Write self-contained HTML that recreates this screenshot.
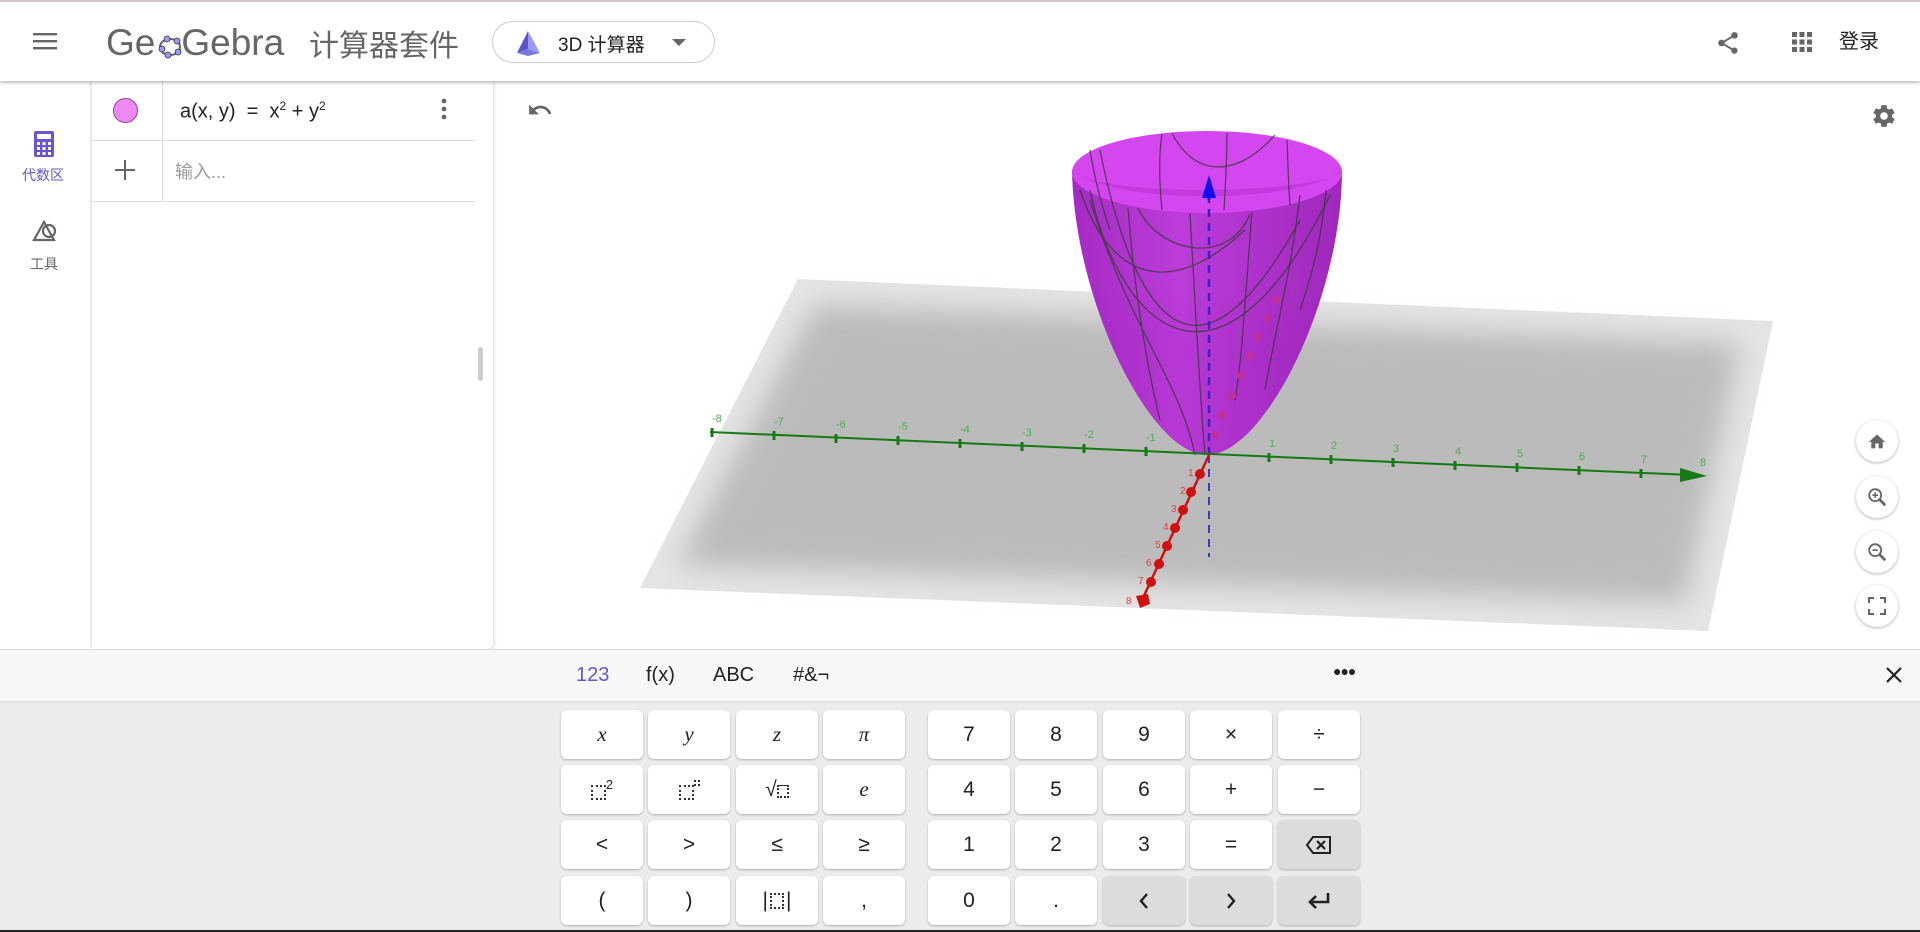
<!DOCTYPE html>
<html><head><meta charset="utf-8">
<style>
*{box-sizing:border-box;margin:0;padding:0}
body{width:1920px;height:932px;overflow:hidden;background:#fff;font-family:"Liberation Sans","Noto Sans CJK SC",sans-serif;position:relative;color:#222}
.abs{position:absolute}
#top{left:0;top:0;width:1920px;height:81px;background:#fff;border-top:2px solid #d9c3cc;box-shadow:0 2px 3px rgba(0,0,0,.25);z-index:5}
.key{position:absolute;width:82px;height:49px;background:#fff;border-radius:6px;box-shadow:0 1px 2px rgba(0,0,0,.25);display:flex;align-items:center;justify-content:center;font-size:21px;color:#222}
.key.g{background:#dcdcdc}
.it{font-family:"Liberation Serif",serif;font-style:italic}
.rb{position:absolute;left:1856px;width:42px;height:42px;border-radius:50%;background:#fff;box-shadow:0 1px 3px rgba(0,0,0,.3);display:flex;align-items:center;justify-content:center}
</style></head><body>

<div id="top" class="abs">
  <svg class="abs" style="left:33px;top:29px" width="24" height="20"><rect x="0" y="2" width="24" height="2.4" fill="#666"/><rect x="0" y="9" width="24" height="2.4" fill="#666"/><rect x="0" y="16" width="24" height="2.4" fill="#666"/></svg>
  <div class="abs" style="left:106px;top:20px;font-size:37px;color:#666;letter-spacing:0px">Ge<span style="display:inline-block;width:26px"></span>Gebra</div>
  <svg class="abs" style="left:157px;top:31px" width="26" height="26"><ellipse cx="13" cy="14" rx="10" ry="8" fill="none" stroke="#666" stroke-width="2"/><circle cx="5" cy="16" r="3" fill="#99f" stroke="#333" stroke-width=".8"/><circle cx="10" cy="6" r="3" fill="#99f" stroke="#333" stroke-width=".8"/><circle cx="20" cy="8" r="3" fill="#99f" stroke="#333" stroke-width=".8"/><circle cx="21" cy="19" r="3" fill="#99f" stroke="#333" stroke-width=".8"/><circle cx="11" cy="22" r="3" fill="#99f" stroke="#333" stroke-width=".8"/></svg>
  <div class="abs" style="left:309px;top:19px;font-size:30px;color:#666">计算器套件</div>
  <div class="abs" style="left:492px;top:19px;width:223px;height:42px;border:1px solid #ccc;border-radius:21px"></div>
  <svg class="abs" style="left:514px;top:27px" width="28" height="28"><polygon points="14,2 3,24 14,20" fill="#5555cc"/><polygon points="14,2 14,20 26,24" fill="#9a9aff"/><polygon points="3,24 14,20 26,24 14,27" fill="#7777dd"/></svg>
  <div class="abs" style="left:558px;top:28px;font-size:19px;color:#222">3D 计算器</div>
  <svg class="abs" style="left:672px;top:37px" width="14" height="8"><polygon points="0,0 14,0 7,7" fill="#666"/></svg>
  <svg class="abs" style="left:1715px;top:28px" width="26" height="26" viewBox="0 0 24 24"><path fill="#666" d="M18 16.1c-.8 0-1.4.3-2 .8l-7.1-4.2c.1-.2.1-.5.1-.7s0-.5-.1-.7L16 7.2c.5.5 1.2.8 2 .8 1.7 0 3-1.3 3-3s-1.3-3-3-3-3 1.3-3 3c0 .2 0 .5.1.7L8 9.8C7.5 9.3 6.8 9 6 9c-1.7 0-3 1.3-3 3s1.3 3 3 3c.8 0 1.5-.3 2-.8l7.1 4.2c-.1.2-.1.4-.1.6 0 1.6 1.3 2.9 2.9 2.9s2.9-1.3 2.9-2.9-1.2-2.9-2.8-2.9z"/></svg>
  <svg class="abs" style="left:1792px;top:30px" width="20" height="20"><g fill="#666"><rect x="0" y="0" width="5" height="5"/><rect x="7.5" y="0" width="5" height="5"/><rect x="15" y="0" width="5" height="5"/><rect x="0" y="7.5" width="5" height="5"/><rect x="7.5" y="7.5" width="5" height="5"/><rect x="15" y="7.5" width="5" height="5"/><rect x="0" y="15" width="5" height="5"/><rect x="7.5" y="15" width="5" height="5"/><rect x="15" y="15" width="5" height="5"/></g></svg>
  <div class="abs" style="left:1839px;top:23px;font-size:20px;color:#222">登录</div>
</div>

<svg class="abs" style="left:34px;top:131px" width="20" height="26"><rect x="0" y="0" width="20" height="26" rx="2" fill="#6557d2"/><rect x="3" y="3" width="14" height="5" fill="#fff"/><g fill="#fff"><rect x="3" y="11" width="3" height="3"/><rect x="8.5" y="11" width="3" height="3"/><rect x="14" y="11" width="3" height="3"/><rect x="3" y="16" width="3" height="3"/><rect x="8.5" y="16" width="3" height="3"/><rect x="14" y="16" width="3" height="3"/><rect x="3" y="21" width="3" height="3"/><rect x="8.5" y="21" width="3" height="3"/><rect x="14" y="21" width="3" height="3"/></g></svg>
<div class="abs" style="left:22px;top:165px;font-size:14px;color:#6557d2">代数区</div>
<svg class="abs" style="left:32px;top:220px" width="26" height="24"><polygon points="12,2 2,20 22,20" fill="none" stroke="#666" stroke-width="2.2"/><circle cx="17" cy="11" r="6" fill="none" stroke="#666" stroke-width="2.2"/></svg>
<div class="abs" style="left:30px;top:254px;font-size:14px;color:#666">工具</div>

<div class="abs" style="left:92px;top:81px;width:401px;height:568px;background:#fff;box-shadow:0 0 4px rgba(0,0,0,.25);border-radius:0 0 6px 0"></div>
<div class="abs" style="left:92px;top:140px;width:383px;height:1px;background:#ddd"></div>
<div class="abs" style="left:92px;top:201px;width:383px;height:1px;background:#ddd"></div>
<div class="abs" style="left:162px;top:81px;width:1px;height:120px;background:#ddd"></div>
<div class="abs" style="left:113px;top:98px;width:25px;height:25px;border-radius:50%;background:#ee88f7;border:1px solid #994099"></div>
<div class="abs" style="left:180px;top:99px;font-size:20px;color:#222">a(x, y) &nbsp;=&nbsp; x<sup style="font-size:12px">2</sup> + y<sup style="font-size:12px">2</sup></div>
<svg class="abs" style="left:441px;top:98px" width="6" height="24"><circle cx="3" cy="3" r="2.4" fill="#666"/><circle cx="3" cy="11" r="2.4" fill="#666"/><circle cx="3" cy="19" r="2.4" fill="#666"/></svg>
<svg class="abs" style="left:115px;top:160px" width="20" height="20"><rect x="9" y="0" width="2" height="20" fill="#666"/><rect x="0" y="9" width="20" height="2" fill="#666"/></svg>
<div class="abs" style="left:175px;top:158px;font-size:18px;color:#999">输入...</div>
<div class="abs" style="left:478px;top:347px;width:5px;height:34px;border-radius:3px;background:#ccc"></div>

<svg class="abs" style="left:0;top:0" width="1920" height="649">
  <defs>
    <filter id="bl" x="-20%" y="-20%" width="140%" height="140%"><feGaussianBlur stdDeviation="14"/></filter>
    <linearGradient id="pb" x1="0" y1="0" x2="1" y2="0"><stop offset="0" stop-color="#a020c0"/><stop offset=".4" stop-color="#b832d8"/><stop offset="1" stop-color="#9a1cb8"/></linearGradient>
  </defs>
  <polygon points="798,279 1773,321 1708,631 640,588" fill="#e4e4e4"/>
  <polygon points="815,305 1740,343 1685,603 678,565" fill="#bbbbbb" filter="url(#bl)"/>
  <line x1="1209" y1="455" x2="1290" y2="290" stroke="#d04090" stroke-width="2" stroke-dasharray="4,4" opacity=".6"/>
  <path d="M1072,170 C1074,300 1150,455 1207,455 C1264,455 1342,300 1342,170 Z" fill="url(#pb)" opacity=".95"/>
  <ellipse cx="1207" cy="172" rx="135" ry="41" fill="#d447f0"/>
  <path d="M1072,170 C1110,205 1300,205 1342,170 C1330,193 1100,200 1072,170Z" fill="#c23ae0"/>
  <g fill="none" stroke="#3a3a3a" stroke-width="1.3" opacity=".8">
    <path d="M1172,133 C1190,170 1230,185 1275,135"/>
    <path d="M1138,208 C1160,255 1230,265 1250,214"/>
    <path d="M1080,190 C1110,280 1170,300 1245,230"/>
    <path d="M1100,150 C1130,300 1190,420 1300,220"/>
    <path d="M1090,190 C1120,330 1220,420 1330,195"/>
    <path d="M1090,200 C1130,330 1180,380 1195,455"/>
    <path d="M1128,208 C1135,300 1150,380 1160,420"/>
    <path d="M1190,213 C1195,300 1200,400 1205,455"/>
    <path d="M1252,212 C1245,300 1242,360 1235,400"/>
    <path d="M1300,195 C1290,280 1275,330 1265,390"/>
    <path d="M1326,190 C1320,250 1310,280 1300,310"/>
    <path d="M1162,134 C1158,160 1160,190 1162,210"/>
    <path d="M1227,133 C1227,160 1225,190 1224,210"/>
    <path d="M1287,140 C1288,160 1288,180 1290,205"/>
    <path d="M1090,150 C1095,180 1100,200 1110,230"/>
  </g>
  <g fill="#c0309a"><circle cx="1276" cy="300" r="4"/><circle cx="1267" cy="318" r="4"/><circle cx="1258" cy="337" r="4"/><circle cx="1250" cy="356" r="4"/><circle cx="1241" cy="376" r="4"/><circle cx="1232" cy="396" r="4"/><circle cx="1222" cy="415" r="4"/><circle cx="1215" cy="435" r="4"/></g>
  <line x1="1209" y1="455" x2="1209" y2="200" stroke="#3a22c8" stroke-width="2.5" stroke-dasharray="8,6"/>
  <line x1="1209" y1="200" x2="1209" y2="188" stroke="#1010ee" stroke-width="3"/>
  <polygon points="1209,175 1202,198 1216,198" fill="#1010ee"/>
  <line x1="1209" y1="455" x2="1209" y2="557" stroke="#3a3ac8" stroke-width="2" stroke-dasharray="8,6"/>
  <line x1="710" y1="432" x2="1690" y2="475" stroke="#157a15" stroke-width="2"/>
  <polygon points="1707,476 1680,468 1680,482" fill="#157a15"/>
  <g stroke="#157a15" stroke-width="3">
    <line x1="712" y1="428" x2="712" y2="437"/><line x1="774" y1="431" x2="774" y2="440"/><line x1="836" y1="434" x2="836" y2="443"/><line x1="898" y1="436" x2="898" y2="445"/><line x1="960" y1="439" x2="960" y2="448"/><line x1="1022" y1="442" x2="1022" y2="451"/><line x1="1084" y1="444" x2="1084" y2="453"/><line x1="1146" y1="447" x2="1146" y2="456"/><line x1="1269" y1="453" x2="1269" y2="462"/><line x1="1331" y1="455" x2="1331" y2="464"/><line x1="1393" y1="458" x2="1393" y2="467"/><line x1="1455" y1="461" x2="1455" y2="470"/><line x1="1517" y1="463" x2="1517" y2="472"/><line x1="1579" y1="466" x2="1579" y2="475"/><line x1="1641" y1="469" x2="1641" y2="478"/>
  </g>
  <g fill="#4caf50" font-size="11" font-family="Liberation Sans">
    <text x="712" y="422">-8</text><text x="774" y="425">-7</text><text x="836" y="428">-6</text><text x="898" y="430">-5</text><text x="960" y="433">-4</text><text x="1022" y="436">-3</text><text x="1084" y="438">-2</text><text x="1146" y="441">-1</text><text x="1269" y="447">1</text><text x="1331" y="449">2</text><text x="1393" y="452">3</text><text x="1455" y="455">4</text><text x="1517" y="457">5</text><text x="1579" y="460">6</text><text x="1641" y="463">7</text><text x="1700" y="466">8</text>
  </g>
  <line x1="1209" y1="455" x2="1142" y2="600" stroke="#cc1010" stroke-width="2.5"/>
  <g fill="#d01010"><circle cx="1200" cy="474" r="5"/><circle cx="1191" cy="492" r="5"/><circle cx="1183" cy="510" r="5"/><circle cx="1175" cy="528" r="5"/><circle cx="1167" cy="546" r="5"/><circle cx="1159" cy="564" r="5"/><circle cx="1151" cy="582" r="5"/><polygon points="1136,596 1148,594 1150,604 1140,608"/></g>
  <g fill="#e04040" font-size="10"><text x="1188" y="476">1</text><text x="1180" y="494">2</text><text x="1171" y="512">3</text><text x="1163" y="530">4</text><text x="1155" y="548">5</text><text x="1146" y="566">6</text><text x="1138" y="584">7</text><text x="1126" y="604">8</text></g>
</svg>

<svg class="abs" style="left:527px;top:100px" width="26" height="20" viewBox="0 0 24 18"><path fill="#666" d="M12.5 5c-2.6 0-5 1-6.9 2.6L2 4v9h9L7.4 9.4c1.4-1.2 3.2-1.9 5.1-1.9 3.5 0 6.5 2.3 7.600 5.5l2.4-.8C21 8 17.1 5 12.5 5z"/></svg>
<svg class="abs" style="left:1871px;top:103px" width="26" height="26" viewBox="0 0 24 24"><path fill="#666" d="M19.4 13c.04-.3.06-.6.06-1s-.02-.7-.07-1l2.1-1.6c.2-.15.24-.42.12-.64l-2-3.46c-.12-.22-.39-.3-.61-.22l-2.5 1c-.52-.4-1.08-.73-1.69-.98l-.38-2.65A.49.49 0 0 0 14 2h-4c-.25 0-.46.18-.49.42l-.38 2.65c-.61.25-1.17.59-1.69.98l-2.49-1c-.23-.09-.49 0-.61.22l-2 3.46c-.13.22-.07.49.12.64L4.57 11c-.05.32-.07.65-.07 1s.02.68.07 1l-2.11 1.65c-.19.15-.24.42-.12.64l2 3.46c.12.22.39.3.61.22l2.49-1c.52.4 1.08.73 1.69.98l.38 2.65c.03.24.24.42.49.42h4c.25 0 .46-.18.49-.42l.38-2.65c.61-.25 1.17-.59 1.69-.98l2.49 1c.23.09.49 0 .61-.22l2-3.46c.12-.22.07-.49-.12-.64L19.4 13zM12 15.5c-1.93 0-3.5-1.57-3.5-3.5s1.57-3.5 3.5-3.5 3.5 1.57 3.5 3.5-1.57 3.5-3.5 3.5z"/></svg>

<div class="rb" style="top:420px"><svg width="20" height="18" viewBox="0 0 24 22"><path fill="#666" d="M10 20v-6h4v6h5v-8h3L12 3 2 12h3v8z"/></svg></div>
<div class="rb" style="top:476px"><svg width="22" height="22" viewBox="0 0 24 24"><circle cx="10" cy="10" r="6.5" fill="none" stroke="#666" stroke-width="2"/><line x1="15" y1="15" x2="21" y2="21" stroke="#666" stroke-width="3"/><path d="M10 7v6M7 10h6" stroke="#666" stroke-width="1.8"/></svg></div>
<div class="rb" style="top:531px"><svg width="22" height="22" viewBox="0 0 24 24"><circle cx="10" cy="10" r="6.5" fill="none" stroke="#666" stroke-width="2"/><line x1="15" y1="15" x2="21" y2="21" stroke="#666" stroke-width="3"/><path d="M7 10h6" stroke="#666" stroke-width="1.8"/></svg></div>
<div class="rb" style="top:585px"><svg width="18" height="18" viewBox="0 0 18 18"><path d="M1 6V1h5M12 1h5v5M17 12v5h-5M6 17H1v-5" fill="none" stroke="#666" stroke-width="2"/></svg></div>

<div class="abs" style="left:0;top:649px;width:1920px;height:53px;background:#f7f7f7;border-top:1px solid #ddd;border-bottom:1px solid #ddd"></div>
<div class="abs" style="left:0;top:702px;width:1920px;height:230px;background:#ececec"></div>
<div class="abs" style="left:576px;top:664px;font-size:20px;color:#6557d2">123</div>
<div class="abs" style="left:646px;top:664px;font-size:20px">f(x)</div>
<div class="abs" style="left:713px;top:664px;font-size:20px">ABC</div>
<div class="abs" style="left:793px;top:664px;font-size:20px">#&amp;¬</div>
<div class="abs" style="left:1333px;top:663px;font-size:14px;font-weight:bold;letter-spacing:-1px">●●●</div>
<svg class="abs" style="left:1886px;top:667px" width="16" height="16"><path d="M1 1L15 15M15 1L1 15" stroke="#222" stroke-width="2.2"/></svg>
<div class="abs" style="left:0;top:930px;width:1920px;height:2px;background:#222"></div>

<div class="key it" style="left:561px;top:710px">x</div>
<div class="key it" style="left:648px;top:710px">y</div>
<div class="key it" style="left:736px;top:710px">z</div>
<div class="key it" style="left:823px;top:710px">π</div>
<div class="key" style="left:561px;top:765px"><span style="display:inline-block;width:15px;height:15px;border:2px dotted #333;margin-top:6px"></span><sup style="font-size:13px;margin-top:-10px">2</sup></div>
<div class="key" style="left:648px;top:765px"><span style="display:inline-block;width:15px;height:15px;border:2px dotted #333;margin-top:6px"></span><span style="display:inline-block;width:6px;height:6px;border:2px dotted #333;margin-top:-14px"></span></div>
<div class="key" style="left:736px;top:765px">√<span style="display:inline-block;width:12px;height:13px;border:2px dotted #333;border-top:1.5px solid #333;margin-top:4px"></span></div>
<div class="key it" style="left:823px;top:765px">e</div>
<div class="key" style="left:561px;top:820px">&lt;</div>
<div class="key" style="left:648px;top:820px">&gt;</div>
<div class="key" style="left:736px;top:820px">≤</div>
<div class="key" style="left:823px;top:820px">≥</div>
<div class="key" style="left:561px;top:876px">(</div>
<div class="key" style="left:648px;top:876px">)</div>
<div class="key" style="left:736px;top:876px">|<span style="display:inline-block;width:14px;height:16px;border:2px dotted #333;margin:0 2px"></span>|</div>
<div class="key" style="left:823px;top:876px">,</div>

<div class="key" style="left:928px;top:710px">7</div>
<div class="key" style="left:1015px;top:710px">8</div>
<div class="key" style="left:1103px;top:710px">9</div>
<div class="key" style="left:1190px;top:710px">×</div>
<div class="key" style="left:1278px;top:710px">÷</div>
<div class="key" style="left:928px;top:765px">4</div>
<div class="key" style="left:1015px;top:765px">5</div>
<div class="key" style="left:1103px;top:765px">6</div>
<div class="key" style="left:1190px;top:765px">+</div>
<div class="key" style="left:1278px;top:765px">−</div>
<div class="key" style="left:928px;top:820px">1</div>
<div class="key" style="left:1015px;top:820px">2</div>
<div class="key" style="left:1103px;top:820px">3</div>
<div class="key" style="left:1190px;top:820px">=</div>
<div class="key g" style="left:1278px;top:820px"><svg width="26" height="18" viewBox="0 0 26 18"><path d="M7 1h17v16H7L1 9z" fill="none" stroke="#222" stroke-width="2"/><path d="M11 5l8 8M19 5l-8 8" stroke="#222" stroke-width="2.2"/></svg></div>
<div class="key" style="left:928px;top:876px">0</div>
<div class="key" style="left:1015px;top:876px">.</div>
<div class="key g" style="left:1103px;top:876px"><svg width="10" height="16"><path d="M8 1L2 8l6 7" fill="none" stroke="#222" stroke-width="2.4"/></svg></div>
<div class="key g" style="left:1190px;top:876px"><svg width="10" height="16"><path d="M2 1l6 7-6 7" fill="none" stroke="#222" stroke-width="2.4"/></svg></div>
<div class="key g" style="left:1278px;top:876px"><svg width="24" height="18"><path d="M21 1v9H4" fill="none" stroke="#222" stroke-width="2.6"/><path d="M9 4L3 10l6 6" fill="none" stroke="#222" stroke-width="2.6"/></svg></div>
</body></html>
